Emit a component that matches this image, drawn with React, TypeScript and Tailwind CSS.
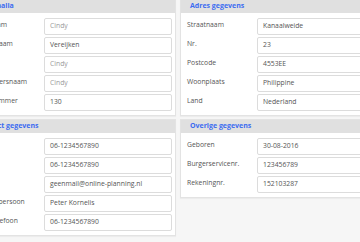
import React from "react";

type Field = { label: string; value: string; muted?: boolean };

const PERSONALIA: Field[] = [
  { label: "Voornaam", value: "Cindy", muted: true },
  { label: "Achternaam", value: "Vereijken" },
  { label: "Initialen", value: "Cindy", muted: true },
  { label: "Gebruikersnaam", value: "Cindy", muted: true },
  { label: "Klantnummer", value: "130" },
];

const ADRES: Field[] = [
  { label: "Straatnaam", value: "Kanaalweide" },
  { label: "Nr.", value: "23" },
  { label: "Postcode", value: "4553EE" },
  { label: "Woonplaats", value: "Philippine" },
  { label: "Land", value: "Nederland" },
];

const CONTACT: Field[] = [
  { label: "Tel.", value: "06-1234567890" },
  { label: "Mobiel", value: "06-1234567890" },
  { label: "E-mail", value: "geenmail@online-planning.nl" },
  { label: "Contactpersoon", value: "Peter Kornelis" },
  { label: "Noodtelefoon", value: "06-1234567890" },
];

const OVERIG: Field[] = [
  { label: "Geboren", value: "30-08-2016" },
  { label: "Burgerservicenr.", value: "123456789" },
  { label: "Rekeningnr.", value: "152103287" },
];

function Panel({ title, fields }: { title: string; fields: Field[] }) {
  return (
    <section className="self-start border border-[#e3e3e3] bg-white shadow-[0_1px_1px_rgba(0,0,0,0.04)]">
      <h2 className="flex h-[13px] items-center bg-[#e0e0e0] pl-[9px] text-[7px] font-bold text-[#3d6cf0]">
        {title}
      </h2>
      <div className="flex flex-col gap-[2px] pb-[4px] pl-[6px] pr-[3px] pt-[5px]">
        {fields.map((f) => (
          <div key={f.label} className="flex h-[17px]">
            <label className="w-[70px] shrink-0 pt-[2px] text-[6.8px] text-[#555]">{f.label}</label>
            <div
              className={
                "flex flex-1 items-center rounded-[2px] border border-[#dcdcdc] bg-white pl-[5px] text-[6.8px] " +
                (f.muted ? "text-[#9a9a9a]" : "text-[#555]")
              }
            >
              {f.value}
            </div>
          </div>
        ))}
      </div>
    </section>
  );
}

export default function App() {
  return (
    <div
      className="h-[242px] w-[360px] overflow-hidden bg-[#f6f6f6]"
      style={{ fontFamily: '"Open Sans", "Noto Sans", sans-serif' }}
    >
      <div className="-ml-[33px] -mt-[1px] grid grid-cols-[209px_209px] gap-x-[4px] gap-y-[3px]">
        <Panel title="Personalia" fields={PERSONALIA} />
        <Panel title="Adres gegevens" fields={ADRES} />
        <Panel title="Contact gegevens" fields={CONTACT} />
        <Panel title="Overige gegevens" fields={OVERIG} />
      </div>
    </div>
  );
}
